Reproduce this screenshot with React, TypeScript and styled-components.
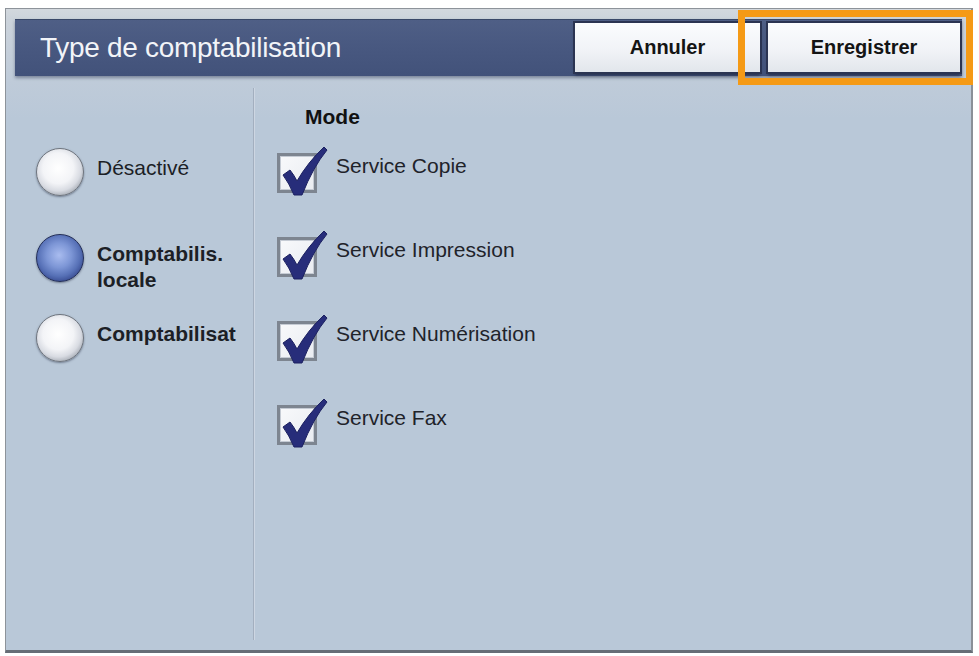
import React from "react";
import styled, { createGlobalStyle, css } from "styled-components";

const GlobalStyle = createGlobalStyle`
  html, body { margin: 0; padding: 0; background: #ffffff; }
  body { font-family: "Liberation Sans", Arial, sans-serif; }
  * { box-sizing: border-box; }
`;

const Frame = styled.div`
  margin: 8px 0 0 5px;
  width: 968px;
  height: 645px;
  border: 1px solid #8d939a;
  border-right: 2px solid #8a9098;
  border-bottom: 3px solid #666d76;
  background: linear-gradient(#d3d8de 0px, #ccd3db 10px, #bfcbd9 72px, #b9c8d8 110px, #b9c8d8 100%);
  padding: 10px 9px 0 9px;
  display: flex;
  flex-direction: column;
`;

const Header = styled.div`
  height: 57px;
  flex: none;
  display: flex;
  align-items: center;
  gap: 8px;
  padding: 0 2px 0 25px;
  background: linear-gradient(#4f5f86 0%, #485880 50%, #42527a 100%);
  box-shadow: 0 2px 3px rgba(40, 50, 80, 0.45), inset 0 1px 0 #3a4868;
`;

const Title = styled.div`
  flex: 1;
  color: #f2f4f8;
  font-size: 28px;
  letter-spacing: -0.3px;
  line-height: 30px;
`;

const ButtonWrap = styled.div`
  position: relative;
  display: flex;
`;

const Button = styled.div<{ $w: number }>`
  width: ${(p) => p.$w}px;
  height: 49px;
  display: flex;
  align-items: center;
  justify-content: center;
  font-size: 20px;
  font-weight: bold;
  color: #141414;
  background: linear-gradient(#fbfcfe 0%, #f1f3f7 55%, #e2e6ec 100%);
  box-shadow: 0 0 0 2px #2b3452, 0 3px 3px rgba(10, 15, 35, 0.6);
`;

const Highlight = styled.div`
  position: absolute;
  left: -30px;
  right: -13px;
  top: -13px;
  bottom: -13px;
  border: 7px solid #f59a16;
  pointer-events: none;
`;

const Content = styled.div`
  flex: 1;
  display: flex;
  min-height: 0;
`;

const LeftColumn = styled.div`
  width: 238px;
  flex: none;
  padding: 72px 0 0 21px;
  display: grid;
  grid-template-rows: 86px 80px 86px;
  align-content: start;
`;

const Divider = styled.div`
  width: 2px;
  flex: none;
  margin: 12px 0 10px 0;
  border-left: 1px solid #a3afbf;
  border-right: 1px solid #cdd6e2;
`;

const RightColumn = styled.div`
  flex: 1;
  padding: 28px 0 0 22px;
  display: flex;
  flex-direction: column;
`;

const RadioRow = styled.div`
  display: flex;
  align-items: flex-start;
  gap: 13px;
`;

const Radio = styled.div<{ $on?: boolean }>`
  width: 48px;
  height: 48px;
  flex: none;
  border-radius: 50%;
  border: 1px solid #6f757e;
  box-shadow: 0 1px 2px rgba(40, 50, 70, 0.5);
  ${(p) =>
    p.$on
      ? css`
          background: radial-gradient(circle at 48% 44%, #a9bcef 0%, #7d96d6 35%, #5670b6 60%, #33458a 80%, #1c2856 100%);
          border-color: #232e58;
        `
      : css`
          background: radial-gradient(circle at 46% 42%, #ffffff 0%, #f3f4f7 42%, #d8dbe2 62%, #9ea4ad 80%, #6f757f 100%);
        `}
`;

const RadioLabel = styled.div<{ $bold?: boolean }>`
  padding-top: 7px;
  font-size: 21px;
  line-height: 26px;
  color: #1c1f26;
  font-weight: ${(p) => (p.$bold ? "bold" : "normal")};
`;

const ModeLabel = styled.div`
  margin-left: 28px;
  font-size: 21px;
  font-weight: bold;
  line-height: 26px;
  color: #111;
`;

const CheckList = styled.div`
  margin-top: 23px;
  display: flex;
  flex-direction: column;
  gap: 44px;
`;

const CheckRow = styled.div`
  display: flex;
  align-items: flex-start;
  gap: 19px;
`;

const CheckBox = styled.div`
  position: relative;
  width: 40px;
  height: 40px;
  flex: none;
  border: 3px solid #7d8590;
  background: linear-gradient(135deg, #f8f9fb 0%, #e9ecf1 100%);
  box-shadow: inset 0 0 0 1px #c5cbd4;
`;

const CheckMark = styled.svg`
  position: absolute;
  left: -3px;
  top: -11px;
  width: 52px;
  height: 54px;
  overflow: visible;
`;

const CheckLabel = styled.div`
  font-size: 21px;
  line-height: 26px;
  color: #1f232a;
`;

const Check = () => (
  <CheckBox>
    <CheckMark viewBox="0 0 52 54">
      <path
        d="M6 30 L13 25 Q17 30 20 36 Q31 17 47 2 L50 5 Q36 22 25 50 L17 50 Q12 38 6 30 Z"
        fill="#272d7a"
        stroke="#1c2160"
        strokeWidth="1"
        strokeLinejoin="round"
      />
    </CheckMark>
  </CheckBox>
);

const services = ["Service Copie", "Service Impression", "Service Numérisation", "Service Fax"];

export default function App() {
  return (
    <>
      <GlobalStyle />
      <Frame>
        <Header>
          <Title>Type de comptabilisation</Title>
          <ButtonWrap>
            <Button $w={185}>Annuler</Button>
          </ButtonWrap>
          <ButtonWrap>
            <Button $w={192}>Enregistrer</Button>
            <Highlight />
          </ButtonWrap>
        </Header>
        <Content>
          <LeftColumn>
            <RadioRow>
              <Radio />
              <RadioLabel>Désactivé</RadioLabel>
            </RadioRow>
            <RadioRow>
              <Radio $on />
              <RadioLabel $bold>
                Comptabilis.
                <br />
                locale
              </RadioLabel>
            </RadioRow>
            <RadioRow>
              <Radio />
              <RadioLabel $bold>Comptabilisat</RadioLabel>
            </RadioRow>
          </LeftColumn>
          <Divider />
          <RightColumn>
            <ModeLabel>Mode</ModeLabel>
            <CheckList>
              {services.map((s) => (
                <CheckRow key={s}>
                  <Check />
                  <CheckLabel>{s}</CheckLabel>
                </CheckRow>
              ))}
            </CheckList>
          </RightColumn>
        </Content>
      </Frame>
    </>
  );
}
